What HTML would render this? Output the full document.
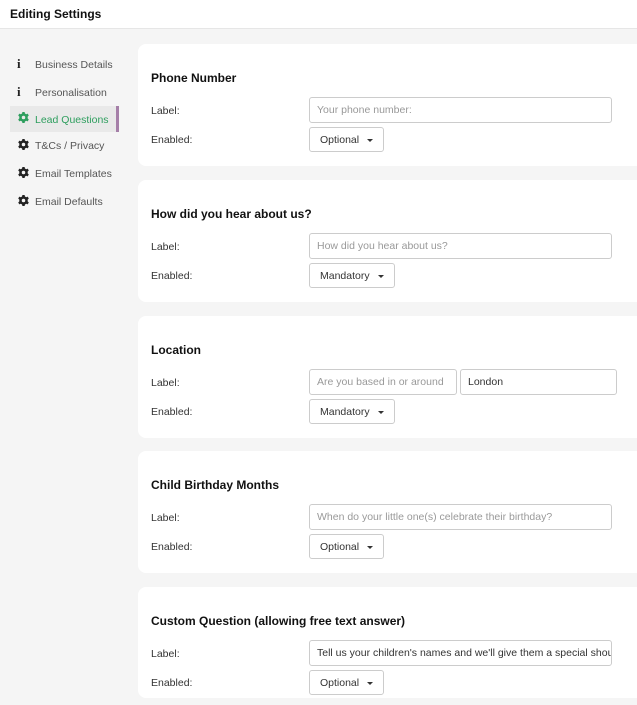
<!DOCTYPE html>
<html><head><style>
*{box-sizing:border-box;margin:0;padding:0}
body{width:637px;height:705px;overflow:hidden;background:#f5f5f5;font-family:"Liberation Sans",Arial,sans-serif;font-size:10.5px;color:#333;position:relative}
.hdr{position:absolute;left:0;top:0;width:637px;height:29px;background:#fff;border-bottom:1px solid #e6e6e6}
.hdr b{position:absolute;left:10px;top:7px;font-size:12px;color:#111}
.nav{position:absolute;left:35px;font-size:10.5px;color:#555}
.ic{position:absolute;left:18px}
.info{position:absolute;left:17px;font-family:"Liberation Serif",serif;font-weight:bold;font-size:13px;color:#222}
.act{position:absolute;left:10px;top:106px;width:109px;height:26px;background:#e9e9e9;border-right:3px solid #a57fa8}
.card{position:absolute;left:138px;width:499px;height:122px;background:#fff;border-radius:8px 0 0 8px}
.card h3{position:absolute;left:13px;top:27px;font-size:12px;color:#111;font-weight:bold}
.lb{position:absolute;left:13px;font-size:10.5px;color:#333}
.in{position:absolute;left:171px;height:26px;border:1px solid #ccc;border-radius:3px;padding:0 7px;line-height:25px;font-size:10.5px;color:#999;white-space:nowrap;overflow:hidden;background:#fff}
.sel{position:absolute;left:171px;height:25px;border:1px solid #ccc;border-radius:3px;padding:0 10px;line-height:24px;font-size:10.5px;color:#333;background:#fff}
.sel:after{content:"";display:inline-block;margin-left:8px;border-left:3px solid transparent;border-right:3px solid transparent;border-top:3px solid #333;vertical-align:middle}
</style></head><body>
<div class="hdr"><b>Editing Settings</b></div>
<div class="act"></div>
<span class="info" style="top:56px">i</span><span class="nav" style="top:59px">Business Details</span>
<span class="info" style="top:84px">i</span><span class="nav" style="top:87px">Personalisation</span>
<svg class="ic" style="top:112px" width="11" height="11" viewBox="0 0 10 10"><path fill="#2e9e5e" d="M4 0h2l.3 1.4 1.2.7 1.3-.6 1 1.7-1 1v1.6l1 1-1 1.7-1.3-.6-1.2.7L6 10H4l-.3-1.4-1.2-.7-1.3.6-1-1.7 1-1V4.2l-1-1 1-1.7 1.3.6 1.2-.7zM5 3.4a1.6 1.6 0 100 3.2 1.6 1.6 0 000-3.2z"/></svg>
<span class="nav" style="top:114px;color:#2e9e5e">Lead Questions</span>
<svg class="ic" style="top:139px" width="11" height="11" viewBox="0 0 10 10"><path fill="#222" d="M4 0h2l.3 1.4 1.2.7 1.3-.6 1 1.7-1 1v1.6l1 1-1 1.7-1.3-.6-1.2.7L6 10H4l-.3-1.4-1.2-.7-1.3.6-1-1.7 1-1V4.2l-1-1 1-1.7 1.3.6 1.2-.7zM5 3.4a1.6 1.6 0 100 3.2 1.6 1.6 0 000-3.2z"/></svg>
<span class="nav" style="top:140px">T&amp;Cs / Privacy</span>
<svg class="ic" style="top:167px" width="11" height="11" viewBox="0 0 10 10"><path fill="#222" d="M4 0h2l.3 1.4 1.2.7 1.3-.6 1 1.7-1 1v1.6l1 1-1 1.7-1.3-.6-1.2.7L6 10H4l-.3-1.4-1.2-.7-1.3.6-1-1.7 1-1V4.2l-1-1 1-1.7 1.3.6 1.2-.7zM5 3.4a1.6 1.6 0 100 3.2 1.6 1.6 0 000-3.2z"/></svg>
<span class="nav" style="top:168px">Email Templates</span>
<svg class="ic" style="top:195px" width="11" height="11" viewBox="0 0 10 10"><path fill="#222" d="M4 0h2l.3 1.4 1.2.7 1.3-.6 1 1.7-1 1v1.6l1 1-1 1.7-1.3-.6-1.2.7L6 10H4l-.3-1.4-1.2-.7-1.3.6-1-1.7 1-1V4.2l-1-1 1-1.7 1.3.6 1.2-.7zM5 3.4a1.6 1.6 0 100 3.2 1.6 1.6 0 000-3.2z"/></svg>
<span class="nav" style="top:196px">Email Defaults</span>

<div class="card" style="top:44px"><h3>Phone Number</h3>
<span class="lb" style="top:61px">Label:</span><div class="in" style="top:53px;width:303px">Your phone number:</div>
<span class="lb" style="top:90px">Enabled:</span><div class="sel" style="top:83px">Optional</div></div>

<div class="card" style="top:180px"><h3>How did you hear about us?</h3>
<span class="lb" style="top:61px">Label:</span><div class="in" style="top:53px;width:303px">How did you hear about us?</div>
<span class="lb" style="top:90px">Enabled:</span><div class="sel" style="top:83px">Mandatory</div></div>

<div class="card" style="top:316px"><h3>Location</h3>
<span class="lb" style="top:61px">Label:</span><div class="in" style="top:53px;width:148px">Are you based in or around</div><div class="in" style="top:53px;left:322px;width:157px;color:#333">London</div>
<span class="lb" style="top:90px">Enabled:</span><div class="sel" style="top:83px">Mandatory</div></div>

<div class="card" style="top:451px"><h3>Child Birthday Months</h3>
<span class="lb" style="top:61px">Label:</span><div class="in" style="top:53px;width:303px">When do your little one(s) celebrate their birthday?</div>
<span class="lb" style="top:90px">Enabled:</span><div class="sel" style="top:83px">Optional</div></div>

<div class="card" style="top:587px;height:111px"><h3>Custom Question (allowing free text answer)</h3>
<span class="lb" style="top:61px">Label:</span><div class="in" style="top:53px;width:303px;color:#333">Tell us your children's names and we'll give them a special shout out</div>
<span class="lb" style="top:90px">Enabled:</span><div class="sel" style="top:83px">Optional</div></div>
</body></html>
